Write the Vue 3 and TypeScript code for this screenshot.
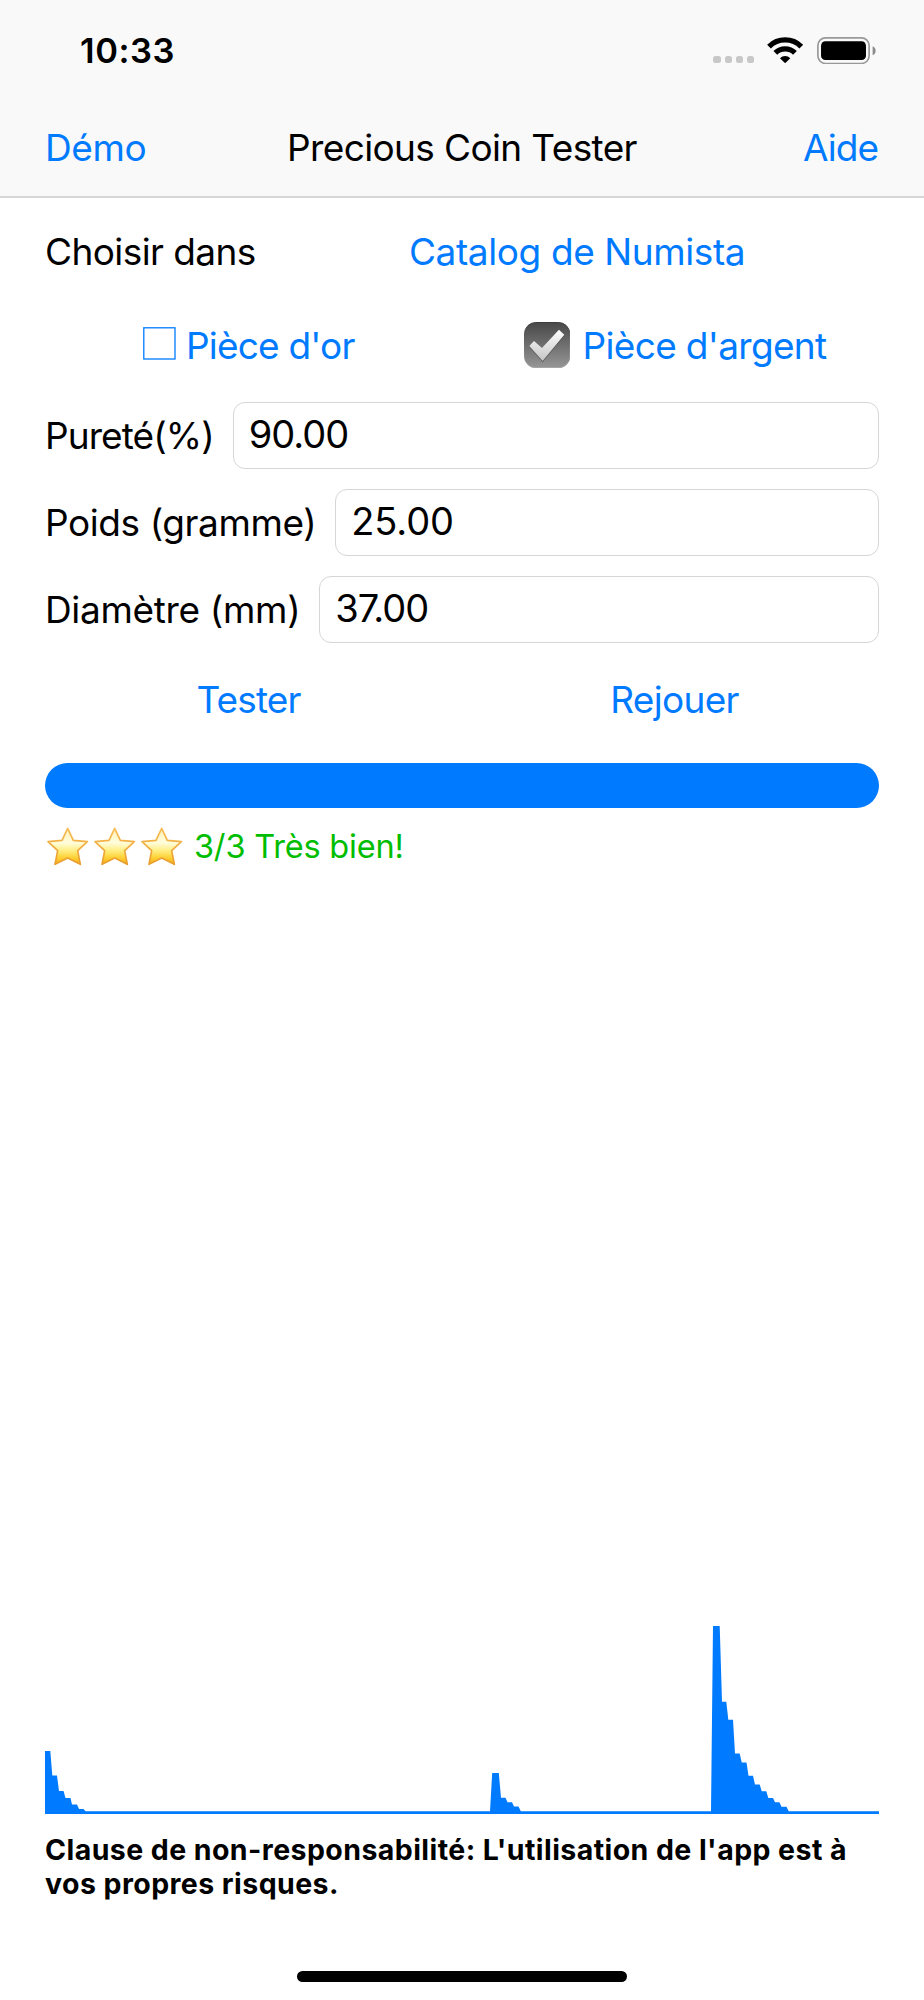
<script setup lang="ts">
import { computed, ref } from 'vue'

interface Field {
  id: string
  label: string
  value: string
}

const fields = ref<Field[]>([
  { id: 'purity', label: 'Pureté(%)', value: '90.00' },
  { id: 'weight', label: 'Poids (gramme)', value: '25.00' },
  { id: 'diameter', label: 'Diamètre (mm)', value: '37.00' },
])

const stars = 3

// Spectrum outline: x offset and height above the baseline.
const CHART_HEIGHT = 194
const spectrum: [number, number][] = [
  [0, 63], [5.3, 63], [7.3, 38.4], [12, 38.4], [14, 23], [18.5, 23], [20.5, 16], [25.5, 16],
  [27, 9.4], [32, 9.4], [34, 5], [38.5, 5], [40.5, 2.8],
  [445, 2.8], [447.2, 41], [453.8, 41], [456, 16.2], [460.5, 16.2], [462.5, 11.7], [467, 11.7],
  [469, 7.4], [473.5, 7.4], [475.8, 2.8],
  [666, 2.8], [668, 188], [674.7, 188], [677, 112.3], [681.3, 112.3], [683.3, 94.3], [688, 94.3],
  [690, 60.6], [694.7, 60.6], [696.7, 51.6], [701.5, 51.6], [703.5, 38.3], [708, 38.3],
  [710, 29.5], [714.7, 29.5], [716.7, 22.7], [721.3, 22.7], [723.3, 16], [728, 16],
  [730, 11.7], [734.5, 11.7], [736.5, 7.3], [741.5, 7.3], [743.7, 2.8], [834, 2.8],
  [834, 0], [0, 0],
]
const outline = computed(() => spectrum.map(([x, h]) => `${x},${(CHART_HEIGHT - h).toFixed(1)}`).join(' '))
</script>

<template>
  <div class="screen">
    <header class="header">
      <div class="status">
        <span class="clock">10:33</span>
        <div class="indicators">
          <span class="signal"><i v-for="n in 4" :key="n"></i></span>
          <svg class="wifi" viewBox="0 0 109 79" aria-hidden="true">
            <g fill="none" stroke="#000" stroke-width="16">
              <path d="M6 28.8A69 69 0 0 1 103 28.8" />
              <path d="M25 48A42 42 0 0 1 84 48" />
            </g>
            <path d="M39 63.5A22 22 0 0 1 70 63.5L56 77.5Q54.5 79 53 77.5Z" />
          </svg>
          <svg class="battery" viewBox="0 0 177 82" aria-hidden="true">
            <rect x="2.5" y="2.5" width="154" height="77" rx="23" fill="none" stroke="#999" stroke-width="5" />
            <rect x="12" y="13" width="135" height="56" rx="13" />
            <path d="M167 27.5C173 30 176 35 176 41S173 52 167 54.5Z" fill="#8c8c8c" />
          </svg>
        </div>
      </div>
      <nav class="nav">
        <a class="link demo">Démo</a>
        <h1 class="title">Precious Coin Tester</h1>
        <a class="link help">Aide</a>
      </nav>
    </header>

    <main class="content">
      <div class="source">
        <span class="choose">Choisir dans</span>
        <a class="link catalog">Catalog de Numista</a>
      </div>

      <div class="metals">
        <a class="link metal gold">
          <svg class="box" viewBox="0 0 33 33" aria-hidden="true">
            <rect x="0.8" y="0.8" width="31.2" height="31.2" fill="none" stroke="#007aff" stroke-width="1.3" />
          </svg>
          <span>Pièce d'or</span>
        </a>
        <a class="link metal silver">
          <svg class="checked" viewBox="0 0 139 139" aria-hidden="true">
            <defs>
              <linearGradient id="tile" x1="0" y1="0" x2="0" y2="1">
                <stop offset="0" stop-color="#484848" />
                <stop offset="1" stop-color="#969696" />
              </linearGradient>
              <linearGradient id="edge" x1="0" y1="0" x2="0" y2="1">
                <stop offset="0" stop-color="#3c3c3c" />
                <stop offset="1" stop-color="#a2a2a2" />
              </linearGradient>
              <linearGradient id="tick" x1="0" y1="0" x2="0" y2="1">
                <stop offset="0" stop-color="#fff" />
                <stop offset="1" stop-color="#c4c4c4" />
              </linearGradient>
            </defs>
            <rect x="1.5" y="1.5" width="136" height="136" rx="34" fill="url(#tile)" stroke="url(#edge)" stroke-width="3" />
            <path d="M16 74L30 60L54 82L105 26L121 41L56 121Z" fill="#444" opacity=".7" />
            <path d="M16 72L30 57L54 78L105 23L121 38L56 117Z" fill="url(#tick)" />
          </svg>
          <span>Pièce d'argent</span>
        </a>
      </div>

      <div class="fields">
        <label v-for="field in fields" :key="field.id" class="field" :class="field.id">
          <span class="name">{{ field.label }}</span>
          <span class="input">{{ field.value }}</span>
        </label>
      </div>

      <div class="actions">
        <a class="link test">Tester</a>
        <a class="link replay">Rejouer</a>
      </div>

      <div class="progress"></div>

      <div class="result">
        <svg width="0" height="0" class="defs" aria-hidden="true">
          <defs>
            <linearGradient id="starFill" x1="0" y1="0" x2="0" y2="1">
              <stop offset="0" stop-color="#fff0b8" />
              <stop offset="0.4" stop-color="#fffddc" />
              <stop offset="0.62" stop-color="#ffee80" />
              <stop offset="0.82" stop-color="#fdd033" />
              <stop offset="1" stop-color="#f7ae1e" />
            </linearGradient>
            <linearGradient id="starEdge" x1="0" y1="0" x2="0" y2="1">
              <stop offset="0" stop-color="#f7bd55" />
              <stop offset="1" stop-color="#e99d2c" />
            </linearGradient>
          </defs>
        </svg>
        <svg v-for="n in stars" :key="n" class="star" viewBox="0 0 141 120" aria-hidden="true">
          <path
            d="M68 7L85 43L127 47L98 74L106 115L68 96L30 115L38 74L9 47L51 43Z"
            fill="url(#starFill)" stroke="url(#starEdge)" stroke-width="5" stroke-linejoin="round"
          />
        </svg>
        <span class="verdict">3/3 Très bien!</span>
      </div>

      <svg class="chart" viewBox="0 0 834 194" aria-hidden="true">
        <polygon :points="outline" fill="#007aff" />
      </svg>

      <p class="disclaimer">
        Clause de non-responsabilité: L'utilisation de l'app est à<br />vos propres risques.
      </p>
    </main>

    <div class="home"></div>
  </div>
</template>

<style>
body {
  margin: 0;
  background: #fff;
}
</style>

<style scoped>
.screen {
  display: flex;
  flex-direction: column;
  box-sizing: border-box;
  width: 924px;
  height: 2000px;
  overflow: hidden;
  background: #fff;
  color: #000;
  font: 400 37px/60px Inter, "Liberation Sans", sans-serif;
  white-space: nowrap;
}
.header {
  box-sizing: border-box;
  height: 198px;
  background: #f9f9f9;
  border-bottom: 2px solid #d6d6d6;
}
.status {
  display: flex;
  align-items: center;
  justify-content: space-between;
  height: 101px;
  padding: 0 48px 0 80px;
}
.clock {
  font-size: 34.5px;
  font-weight: 600;
  letter-spacing: 0.55px;
}
.indicators {
  display: flex;
  align-items: center;
}
.signal {
  display: flex;
  gap: 4px;
  margin-right: 13px;
  padding-top: 18px;
}
.signal i {
  width: 7.2px;
  height: 7.2px;
  border-radius: 2.5px;
  background: #c8c8c8;
}
.wifi {
  width: 36.3px;
  height: 26.3px;
  margin-right: 13.5px;
}
.battery {
  width: 59px;
  height: 27.3px;
}
.nav {
  display: grid;
  grid-template-columns: 1fr auto 1fr;
  align-items: center;
  height: 93px;
  padding: 0 45px;
}
.link {
  color: #007aff;
}
.demo {
  letter-spacing: -0.4px;
}
.title {
  margin: 0;
  font-size: 37px;
  font-weight: 400;
  letter-spacing: -0.63px;
}
.help {
  padding-right: 1px;
  text-align: right;
  letter-spacing: -1px;
}
.content {
  display: flex;
  flex: 1;
  flex-direction: column;
  padding: 0 45px;
}
.source {
  display: flex;
  align-items: center;
  gap: 18px;
  height: 107px;
}
.choose {
  letter-spacing: -0.58px;
}
.catalog {
  flex: 1;
  padding-left: 1.5px;
  text-align: center;
  letter-spacing: -0.4px;
}
.metals,
.actions {
  display: grid;
  grid-template-columns: 1fr 1fr;
  column-gap: 18px;
  align-items: center;
}
.metals {
  height: 80px;
}
.metal {
  display: flex;
  align-items: center;
  justify-content: center;
}
.metal span {
  padding-top: 1px;
}
.gold {
  letter-spacing: -0.8px;
}
.silver {
  letter-spacing: -0.672px;
}
.box {
  width: 33px;
  height: 33px;
  margin: 0 9.5px 3px 0;
}
.checked {
  width: 46.3px;
  height: 46.3px;
  margin-right: 12.7px;
}
.fields {
  display: flex;
  flex-direction: column;
  gap: 20px;
  padding-top: 17px;
}
.field {
  display: flex;
  align-items: center;
  gap: 19px;
  height: 67px;
}
.name {
  padding-top: 1px;
}
.input {
  flex: 1;
  box-sizing: border-box;
  height: 67px;
  padding: 0 15px;
  border: 1px solid #d6d6d6;
  border-radius: 12px;
  font-size: 38px;
  line-height: 62px;
}
.purity .name {
  letter-spacing: -0.92px;
}
.purity .input {
  letter-spacing: -1px;
}
.weight .name {
  letter-spacing: -0.42px;
}
.weight .input {
  letter-spacing: -0.1px;
}
.diameter .name {
  letter-spacing: -0.33px;
}
.diameter .input {
  letter-spacing: -1.1px;
}
.actions {
  height: 114px;
  text-align: center;
}
.test {
  padding-right: 1px;
  letter-spacing: -0.85px;
}
.replay {
  padding-right: 1px;
  letter-spacing: -0.68px;
}
.progress {
  flex: none;
  height: 45px;
  margin-top: 6px;
  border-radius: 22.5px;
  background: #007aff;
}
.result {
  display: flex;
  align-items: center;
  height: 76px;
}
.defs {
  flex: none;
}
.star {
  width: 47px;
  height: 40px;
}
.verdict {
  margin-left: 8px;
  padding-top: 1px;
  color: #00bd00;
  font-size: 32.5px;
  letter-spacing: -0.2px;
}
.chart {
  flex: none;
  width: 834px;
  height: 194px;
  margin-top: auto;
}
.disclaimer {
  margin: 0;
  padding: 19px 0 70px;
  font-size: 28.5px;
  font-weight: 700;
  line-height: 34px;
  letter-spacing: 0.43px;
}
.home {
  align-self: center;
  width: 330px;
  height: 11px;
  margin-bottom: 18px;
  border-radius: 6px;
  background: #000;
}
</style>
